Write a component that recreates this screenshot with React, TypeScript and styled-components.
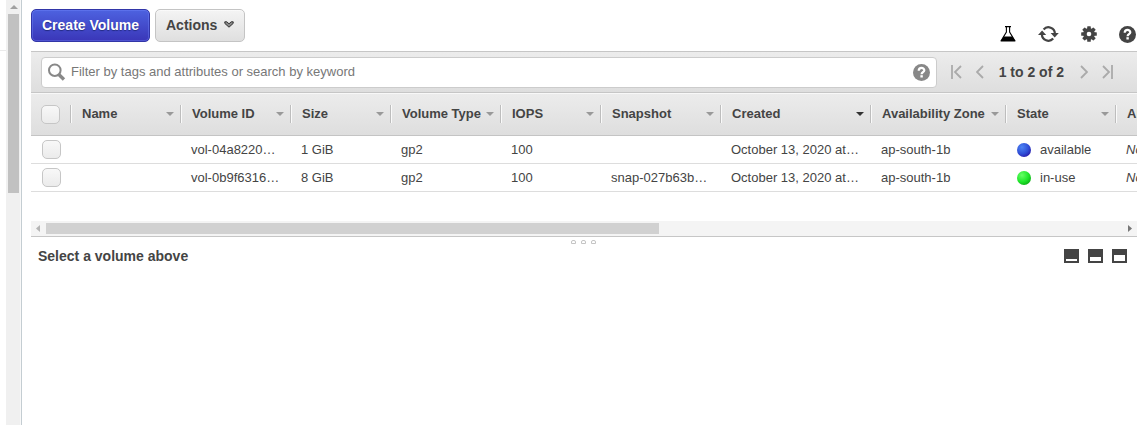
import React from 'react';
import styled, { createGlobalStyle, css } from 'styled-components';

const GlobalStyle = createGlobalStyle`
  *, *::before, *::after { box-sizing: border-box; }
  body {
    margin: 0;
    background: #fff;
    color: #444;
    font-family: "Liberation Sans", Arial, sans-serif;
    font-size: 13px;
    line-height: 16px;
    overflow: hidden;
  }
  button, input { font: inherit; color: inherit; }
`;

const Page = styled.div`
  display: flex;
  min-height: 100vh;
`;

const NavEdge = styled.div`
  width: 6px;
  &::before {
    content: '';
    display: block;
    height: 51px;
    border-bottom: 1px solid #eaeaea;
  }
`;

const NavScroll = styled.div`
  display: flex;
  flex-direction: column;
  align-items: center;
  width: 16px;
  background: #f0f0f0;
  border-right: 1px solid #c4cdd2;
  box-shadow: inset -1px 0 #f8f8f8;
`;

const ArrowUp = styled.div`
  display: flex;
  align-items: flex-end;
  height: 14px;
  padding-bottom: 5px;
  svg { display: block; }
`;

const NavTrack = styled.div`
  flex: 1;
  width: 11px;
`;

const NavThumb = styled.div`
  height: 44%;
  min-height: 179px;
  max-height: 179px;
  background: #c1c1c1;
`;

const Main = styled.main`
  flex: 1;
  min-width: 0;
  padding: 0 10px 0 9px;
`;

const TopBar = styled.header`
  display: flex;
  align-items: center;
  justify-content: space-between;
  height: 51px;
`;

const ButtonGroup = styled.div`
  display: flex;
  gap: 5px;
`;

const Button = styled.button<{ $primary?: boolean }>`
  display: flex;
  align-items: center;
  gap: 7px;
  height: 33px;
  padding: 0 10px 2px;
  border: 1px solid #c4c4c4;
  border-radius: 5px;
  background: linear-gradient(#f4f4f4, #dfdfdf);
  box-shadow: inset 0 1px rgba(255, 255, 255, 0.5);
  font-size: 14px;
  font-weight: bold;
  white-space: nowrap;
  ${(p) =>
    p.$primary &&
    css`
      border-color: #3236a8;
      background: linear-gradient(#4d62e0, #3a36b8);
      box-shadow: inset 0 0 0 1px rgba(120, 140, 255, 0.35);
      color: #fff;
      text-shadow: 0 1px 1px #222a80;
    `}
`;

const Tools = styled.div`
  display: flex;
  align-items: center;
  gap: 22px;
  padding: 17px 1px 0 0;
`;

const IconButton = styled.button`
  display: flex;
  align-items: center;
  justify-content: center;
  padding: 0;
  border: 0;
  background: none;
  svg { display: block; }
`;

const FilterBar = styled.div`
  display: flex;
  align-items: center;
  gap: 14px;
  height: 42px;
  padding: 0 24px 0 10px;
  border-top: 1px solid #c6c6c6;
  border-bottom: 1px solid #c6c6c6;
  background: linear-gradient(#ececec, #dedede);
`;

const SearchBox = styled.label`
  display: flex;
  flex: 1;
  align-items: center;
  gap: 5px;
  height: 31px;
  padding: 0 6px;
  border: 1px solid #ccc;
  border-radius: 4px;
  background: #fff;
  svg { display: block; }
`;

const SearchInput = styled.input`
  flex: 1;
  min-width: 0;
  padding: 0;
  border: 0;
  outline: 0;
  background: none;
  &::placeholder { color: #777; opacity: 1; }
`;

const Pager = styled.nav`
  display: flex;
  align-items: center;
  gap: 14px;
`;

const PagerText = styled.span`
  padding: 0 2px 0 1px;
  font-size: 14px;
  font-weight: bold;
  white-space: nowrap;
`;

const TableArea = styled.div`
  overflow: hidden;
  padding-bottom: 29px;
`;

const Table = styled.table`
  width: 100%;
  min-width: 1104px;
  table-layout: fixed;
  border-collapse: separate;
  border-spacing: 0;
`;

const Th = styled.th`
  height: 43px;
  padding: 0;
  border-bottom: 1px solid #c4c4c4;
  background: linear-gradient(#ececec, #dedede);
  box-shadow: inset 0 1px #f8f8f8;
  text-align: left;
  overflow: hidden;
`;

const HeadCell = styled.button`
  display: flex;
  align-items: center;
  justify-content: space-between;
  width: 100%;
  height: 18px;
  padding: 0 6px 0 11px;
  border: 0;
  border-left: 1px solid #bdbdbd;
  background: none;
  box-shadow: inset 1px 0 #fafafa;
  font-weight: bold;
  white-space: nowrap;
`;

const Caret = styled.span<{ $active?: boolean }>`
  border: 4px solid transparent;
  border-top-color: ${(p) => (p.$active ? '#333' : '#999')};
  border-bottom: 0;
`;

const Td = styled.td<{ $italic?: boolean }>`
  height: 28px;
  padding: 0 0 0 11px;
  border-bottom: 1px solid #ddd;
  font-style: ${(p) => (p.$italic ? 'italic' : 'normal')};
  white-space: nowrap;
  overflow: hidden;
`;

const Checkbox = styled.input`
  appearance: none;
  display: block;
  width: 19px;
  height: 19px;
  margin: 0 0 0 10px;
  border: 1px solid #c6c6c6;
  border-radius: 5px;
  background: linear-gradient(#f8f8f8, #ebebeb);
  ${Td} & { margin-left: 0; }
`;

const State = styled.span`
  display: flex;
  align-items: center;
  gap: 9px;
  padding-left: 1px;
`;

const Dot = styled.i<{ $color: 'blue' | 'green' }>`
  width: 14px;
  height: 14px;
  border-radius: 50%;
  background: ${(p) =>
    p.$color === 'blue'
      ? 'radial-gradient(circle at 35% 30%, #4d84f4, #2f4fd6 50%, #2812a4 85%)'
      : 'radial-gradient(circle at 35% 30%, #66ff66, #1fe62a 50%, #089c10 90%)'};
`;

const ScrollRow = styled.div`
  display: flex;
  align-items: center;
  height: 16px;
  padding: 0 5px;
  border-bottom: 1px solid #c6c6c6;
  background: #f4f4f4;
  svg { display: block; }
`;

const ScrollTrack = styled.div`
  flex: 1;
  margin: 0 6px;
`;

const ScrollThumb = styled.div`
  width: 57%;
  height: 11px;
  background: #d1d1d1;
`;

const Grip = styled.div`
  display: flex;
  justify-content: center;
  gap: 5px;
  height: 10px;
  padding: 3px 2px 0 0;
`;

const GripDot = styled.i`
  width: 5px;
  height: 4px;
  border: 1px solid #c4c4c4;
  border-radius: 2px 2px 0 0;
`;

const DetailBar = styled.section`
  display: flex;
  align-items: center;
  justify-content: space-between;
  padding: 0 10px 0 7px;
`;

const DetailTitle = styled.h2`
  margin: 0;
  font-size: 14px;
  line-height: 18px;
`;

const PaneButtons = styled.div`
  display: flex;
  gap: 9px;
`;

const HelpIcon = ({ color }: { color: string }) => (
  <svg width="17" height="17" viewBox="0 0 17 17">
    <circle cx="8.5" cy="8.5" r="8.5" fill={color} />
    <path d="M5.7 6.7C5.8 3 11.4 3.2 11.3 6.4C11.2 8.2 8.7 8.3 8.6 10.2" fill="none" stroke="#fff" strokeWidth="2.2" />
    <rect x="7.4" y="11.2" width="2.4" height="2.3" fill="#fff" />
  </svg>
);

const FlaskIcon = () => (
  <svg width="16" height="16" viewBox="0 0 16 16">
    <path d="M5 .6h6M6.4 1v5L1.3 14.4h13.4L9.6 6V1" fill="none" stroke="#000" strokeWidth="1.1" />
    <path d="M3.6 10.4h8.8l3.1 5.2H.5z" fill="#000" />
  </svg>
);

const RefreshIcon = () => (
  <svg width="21" height="16" viewBox="0 0 21 16">
    <path d="M5.6 3.4A6.5 6.5 0 0 1 16.9 7.6M15.2 12.6A6.5 6.5 0 0 1 3.9 8.4" fill="none" stroke="#444" strokeWidth="2.2" />
    <path d="M12.6 7h8.2l-4.1 4.4zM0 9h8.2L4.1 4.6z" fill="#444" />
  </svg>
);

const GearIcon = () => (
  <svg width="16" height="16" viewBox="0 0 16 16">
    <g fill="#444">
      {[0, 45, 90, 135].map((a) => (
        <rect key={a} x="6.2" y=".2" width="3.6" height="15.6" rx=".6" transform={`rotate(${a} 8 8)`} />
      ))}
      <circle cx="8" cy="8" r="5.9" />
    </g>
    <circle cx="8" cy="8" r="2.3" fill="#fff" />
  </svg>
);

const SearchIcon = () => (
  <svg width="18" height="18" viewBox="0 0 18 18">
    <circle cx="6.8" cy="7.2" r="5.8" fill="none" stroke="#888" strokeWidth="2" />
    <path d="M10.8 11.4l5.2 5" stroke="#888" strokeWidth="3.4" />
  </svg>
);

const ChevronDown = () => (
  <svg width="10" height="7" viewBox="0 0 10 7">
    <path d="M.8 .8h2L5 2.8 7.2 .8h2v1.6L5 6.2.8 2.4z" fill="#888" stroke="#333" strokeWidth="1" />
  </svg>
);

const PagerIcon = ({ d, width }: { d: string; width: number }) => (
  <svg width={width} height="14" viewBox={`0 0 ${width} 14`}>
    <path d={d} fill="none" stroke="#aaa" strokeWidth="1.8" />
  </svg>
);

const PaneIcon = ({ top }: { top: number }) => (
  <svg width="15" height="14" viewBox="0 0 15 14">
    <rect width="15" height="14" fill="#444" />
    <rect x="2" y={top} width="11" height={12 - top} fill="#fff" />
  </svg>
);

const Triangle = ({ d, color, width, height }: { d: string; color: string; width: number; height: number }) => (
  <svg width={width} height={height}>
    <path d={d} fill={color} />
  </svg>
);

const columns = [
  { title: 'Name', width: 110 },
  { title: 'Volume ID', width: 110 },
  { title: 'Size', width: 100 },
  { title: 'Volume Type', width: 110 },
  { title: 'IOPS', width: 100 },
  { title: 'Snapshot', width: 120 },
  { title: 'Created', width: 150, sorted: true },
  { title: 'Availability Zone', width: 135 },
  { title: 'State', width: 110 },
];

type Volume = { cells: string[]; state: string; color: 'blue' | 'green' };

const volumes: Volume[] = [
  {
    cells: ['', 'vol-04a8220…', '1 GiB', 'gp2', '100', '', 'October 13, 2020 at…', 'ap-south-1b'],
    state: 'available',
    color: 'blue',
  },
  {
    cells: ['', 'vol-0b9f6316…', '8 GiB', 'gp2', '100', 'snap-027b63b…', 'October 13, 2020 at…', 'ap-south-1b'],
    state: 'in-use',
    color: 'green',
  },
];

export default function App() {
  return (
    <>
      <GlobalStyle />
      <Page>
        <NavEdge />
        <NavScroll>
          <ArrowUp>
            <Triangle d="M0 4L4 0l4 4z" color="#a0a0a0" width={8} height={4} />
          </ArrowUp>
          <NavTrack>
            <NavThumb />
          </NavTrack>
        </NavScroll>
        <Main>
          <TopBar>
            <ButtonGroup>
              <Button $primary>Create Volume</Button>
              <Button>
                Actions <ChevronDown />
              </Button>
            </ButtonGroup>
            <Tools>
              <IconButton aria-label="Experiments"><FlaskIcon /></IconButton>
              <IconButton aria-label="Refresh"><RefreshIcon /></IconButton>
              <IconButton aria-label="Settings"><GearIcon /></IconButton>
              <IconButton aria-label="Help"><HelpIcon color="#444" /></IconButton>
            </Tools>
          </TopBar>

          <FilterBar>
            <SearchBox>
              <SearchIcon />
              <SearchInput
                type="text"
                aria-label="Filter volumes"
                placeholder="Filter by tags and attributes or search by keyword"
              />
              <HelpIcon color="#888" />
            </SearchBox>
            <Pager aria-label="Pages">
              <IconButton aria-label="First page"><PagerIcon width={11} d="M1 0v14M10 1L4 7l6 6" /></IconButton>
              <IconButton aria-label="Previous page"><PagerIcon width={8} d="M7 1L1 7l6 6" /></IconButton>
              <PagerText>1 to 2 of 2</PagerText>
              <IconButton aria-label="Next page"><PagerIcon width={8} d="M1 1l6 6-6 6" /></IconButton>
              <IconButton aria-label="Last page"><PagerIcon width={11} d="M10 0v14M1 1l6 6-6 6" /></IconButton>
            </Pager>
          </FilterBar>

          <TableArea>
            <Table>
              <colgroup>
                <col width={39} />
                {columns.map((c) => (
                  <col key={c.title} width={c.width} />
                ))}
                <col />
              </colgroup>
              <thead>
                <tr>
                  <Th>
                    <Checkbox type="checkbox" aria-label="Select all volumes" />
                  </Th>
                  {columns.map((c) => (
                    <Th key={c.title}>
                      <HeadCell>
                        {c.title}
                        <Caret $active={c.sorted} />
                      </HeadCell>
                    </Th>
                  ))}
                  <Th>
                    <HeadCell>Alarm Status</HeadCell>
                  </Th>
                </tr>
              </thead>
              <tbody>
                {volumes.map((v) => (
                  <tr key={v.cells[1]}>
                    <Td>
                      <Checkbox type="checkbox" aria-label={`Select ${v.cells[1]}`} />
                    </Td>
                    {v.cells.map((cell, i) => (
                      <Td key={i}>{cell}</Td>
                    ))}
                    <Td>
                      <State>
                        <Dot $color={v.color} />
                        {v.state}
                      </State>
                    </Td>
                    <Td $italic>None</Td>
                  </tr>
                ))}
              </tbody>
            </Table>
          </TableArea>

          <ScrollRow>
            <Triangle d="M4 0v7L0 3.5z" color="#b5b5b5" width={4} height={7} />
            <ScrollTrack>
              <ScrollThumb />
            </ScrollTrack>
            <Triangle d="M0 0v7l4-3.5z" color="#777" width={4} height={7} />
          </ScrollRow>
          <Grip>
            <GripDot />
            <GripDot />
            <GripDot />
          </Grip>

          <DetailBar>
            <DetailTitle>Select a volume above</DetailTitle>
            <PaneButtons>
              <IconButton aria-label="Minimize details"><PaneIcon top={10} /></IconButton>
              <IconButton aria-label="Split view"><PaneIcon top={8} /></IconButton>
              <IconButton aria-label="Maximize details"><PaneIcon top={6} /></IconButton>
            </PaneButtons>
          </DetailBar>
        </Main>
      </Page>
    </>
  );
}
